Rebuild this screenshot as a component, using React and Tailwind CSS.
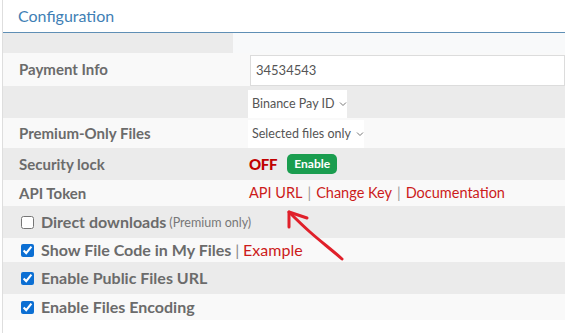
import React from "react";

const font = { fontFamily: 'Lato, "Open Sans", sans-serif' };

function Row({ grey, h, children, className = "" }) {
  return (
    <div
      className={`flex ${grey ? "bg-[#ebebeb]" : "bg-[#f9f9f9]"} ${className}`}
      style={{ height: h }}
    >
      {children}
    </div>
  );
}

function Label({ children }) {
  return (
    <div className="w-[233px] shrink-0 pl-[16px] flex items-center text-[15px] font-bold text-[#6b6b6b]">
      {children}
    </div>
  );
}

function Chevron() {
  return (
    <svg width="8" height="6" viewBox="0 0 8 6" className="shrink-0 ml-[5px]">
      <path d="M1 1.5 L4 4.5 L7 1.5" fill="none" stroke="#777" strokeWidth="1" />
    </svg>
  );
}

function Check({ checked }) {
  return (
    <input
      type="checkbox"
      defaultChecked={checked}
      className="w-[13px] h-[13px] m-0 shrink-0 accent-[#0c6fd3]"
    />
  );
}

function CheckRow({ grey, h, checked, children }) {
  return (
    <Row grey={grey} h={h}>
      <div className="pl-[18px] flex items-center gap-[7px] text-[16px] font-bold text-[#6b6b6b] whitespace-nowrap">
        <Check checked={checked} />
        <span>{children}</span>
      </div>
    </Row>
  );
}

export default function App() {
  return (
    <div className="relative w-[565px] h-[333px] bg-white overflow-hidden" style={font}>
      <div className="ml-[2px] h-full border-l border-[#dedede]">
        <div className="h-[33px] border-b border-[#5f8fb5] pl-[15px] flex items-center">
          <span className="text-[16px] text-[#3f7fb5]">Configuration</span>
        </div>
        <div className="flex h-[20px]">
          <div className="w-[230px] bg-[#ebebeb]" />
          <div className="flex-1 bg-[#f8f9fa]" />
        </div>
        <Row h={33}>
          <Label>Payment Info</Label>
          <div className="flex-1 pl-[14px] pt-[2px]">
            <div className="h-[31px] bg-white border border-[#dcdcdc] flex items-center pl-[5px] text-[13px] text-[#555]">
              34534543
            </div>
          </div>
        </Row>
        <Row grey h={32}>
          <Label></Label>
          <div className="flex-1 pl-[12px] pt-[4px]">
            <div className="w-[99px] h-[28px] bg-white flex items-center pl-[4px] text-[12.5px] text-[#555] whitespace-nowrap">
              Binance Pay ID
              <Chevron />
            </div>
          </div>
        </Row>
        <Row h={30}>
          <Label>Premium-Only Files</Label>
          <div className="flex-1 pl-[12px] pt-[2px]">
            <div className="w-[116px] h-[28px] bg-white flex items-center pl-[4px] text-[12.5px] text-[#555] whitespace-nowrap">
              Selected files only
              <Chevron />
            </div>
          </div>
        </Row>
        <Row grey h={32}>
          <Label>Security lock</Label>
          <div className="flex-1 pl-[13px] flex items-center gap-[10px]">
            <span className="text-[15px] font-black text-[#c00000] tracking-[-0.3px]">OFF</span>
            <span className="h-[20px] w-[50px] rounded-[5px] bg-[#1a9d4f] text-white text-[12px] font-bold flex items-center justify-center">
              Enable
            </span>
          </div>
        </Row>
        <Row h={26}>
          <Label>API Token</Label>
          <div className="flex-1 pl-[13px] flex items-center text-[14.5px] text-[#cc1b1b] whitespace-nowrap">
            <span>API URL</span>
            <span className="text-[#999] mx-[5px]">|</span>
            <span>Change Key</span>
            <span className="text-[#999] mx-[5px]">|</span>
            <span>Documentation</span>
          </div>
        </Row>
        <Row grey h={32}>
          <div className="pl-[18px] flex items-center gap-[7px] whitespace-nowrap">
            <Check checked={false} />
            <span className="text-[16px] font-bold text-[#6b6b6b]">Direct downloads</span>
            <span className="text-[12.5px] text-[#777] -ml-[4px] mt-[2px]">(Premium only)</span>
          </div>
        </Row>
        <Row h={24}>
          <div className="pl-[18px] flex items-center gap-[7px] whitespace-nowrap">
            <Check checked />
            <span className="text-[16px] font-bold text-[#6b6b6b]">
              Show File Code in My Files <span className="font-normal text-[#888]">|</span>{" "}
              <span className="font-normal text-[#cc1b1b]">Example</span>
            </span>
          </div>
        </Row>
        <CheckRow grey h={32} checked>
          Enable Public Files URL
        </CheckRow>
        <CheckRow h={26} checked>
          Enable Files Encoding
        </CheckRow>
      </div>
      <svg
        className="absolute left-0 top-0 pointer-events-none"
        width="565"
        height="333"
        viewBox="0 0 565 333"
      >
        <path
          d="M342 259 C332 250 320 241 310 232 C302 225 295 218 289 212"
          fill="none"
          stroke="#e0202a"
          strokeWidth="3"
          strokeLinecap="round"
        />
        <path
          d="M307 218 L289 212 L289 227"
          fill="none"
          stroke="#e0202a"
          strokeWidth="3"
          strokeLinecap="round"
          strokeLinejoin="round"
        />
      </svg>
    </div>
  );
}
